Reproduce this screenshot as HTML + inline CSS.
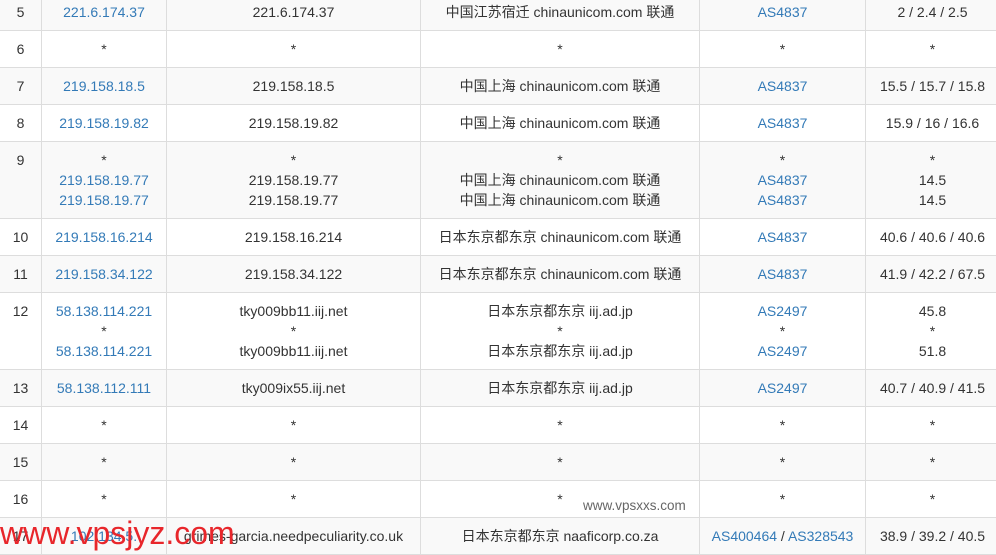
<!DOCTYPE html>
<html><head><meta charset="utf-8"><style>
body{margin:0;width:996px;height:551px;overflow:hidden;background:#fff;font-family:"Liberation Sans","Noto Sans CJK SC",sans-serif;font-size:14px;color:#333;position:relative}
table{position:absolute;top:-7px;left:-1px;border-collapse:collapse;table-layout:fixed;width:1000px}
td{border:1px solid #ddd;text-align:center;vertical-align:top;padding:8px 2px;line-height:20px;white-space:nowrap;overflow:hidden}
tr:nth-child(odd) td{background:#f9f9f9}
a{color:#337ab7;text-decoration:none}
.wm{position:absolute;left:0;top:515px;font-size:32px;color:#e8262b;font-family:"Liberation Sans",sans-serif}
.wm2{position:absolute;left:583px;top:498px;font-size:13.5px;color:#666}
</style></head><body>
<table>
<colgroup><col style="width:42px"><col style="width:125px"><col style="width:254px"><col style="width:279px"><col style="width:166px"><col style="width:134px"></colgroup>
<tr><td>5</td><td><a>221.6.174.37</a></td><td>221.6.174.37</td><td>中国江苏宿迁 chinaunicom.com 联通</td><td><a>AS4837</a></td><td>2 / 2.4 / 2.5</td></tr>
<tr><td>6</td><td>*</td><td>*</td><td>*</td><td>*</td><td>*</td></tr>
<tr><td>7</td><td><a>219.158.18.5</a></td><td>219.158.18.5</td><td>中国上海 chinaunicom.com 联通</td><td><a>AS4837</a></td><td>15.5 / 15.7 / 15.8</td></tr>
<tr><td>8</td><td><a>219.158.19.82</a></td><td>219.158.19.82</td><td>中国上海 chinaunicom.com 联通</td><td><a>AS4837</a></td><td>15.9 / 16 / 16.6</td></tr>
<tr><td>9</td><td>*<br><a>219.158.19.77</a><br><a>219.158.19.77</a></td><td>*<br>219.158.19.77<br>219.158.19.77</td><td>*<br>中国上海 chinaunicom.com 联通<br>中国上海 chinaunicom.com 联通</td><td>*<br><a>AS4837</a><br><a>AS4837</a></td><td>*<br>14.5<br>14.5</td></tr>
<tr><td>10</td><td><a>219.158.16.214</a></td><td>219.158.16.214</td><td>日本东京都东京 chinaunicom.com 联通</td><td><a>AS4837</a></td><td>40.6 / 40.6 / 40.6</td></tr>
<tr><td>11</td><td><a>219.158.34.122</a></td><td>219.158.34.122</td><td>日本东京都东京 chinaunicom.com 联通</td><td><a>AS4837</a></td><td>41.9 / 42.2 / 67.5</td></tr>
<tr><td>12</td><td><a>58.138.114.221</a><br>*<br><a>58.138.114.221</a></td><td>tky009bb11.iij.net<br>*<br>tky009bb11.iij.net</td><td>日本东京都东京 iij.ad.jp<br>*<br>日本东京都东京 iij.ad.jp</td><td><a>AS2497</a><br>*<br><a>AS2497</a></td><td>45.8<br>*<br>51.8</td></tr>
<tr><td>13</td><td><a>58.138.112.111</a></td><td>tky009ix55.iij.net</td><td>日本东京都东京 iij.ad.jp</td><td><a>AS2497</a></td><td>40.7 / 40.9 / 41.5</td></tr>
<tr><td>14</td><td>*</td><td>*</td><td>*</td><td>*</td><td>*</td></tr>
<tr><td>15</td><td>*</td><td>*</td><td>*</td><td>*</td><td>*</td></tr>
<tr><td>16</td><td>*</td><td>*</td><td>*</td><td>*</td><td>*</td></tr>
<tr><td>17</td><td><a>102.134.5.</a></td><td>grimes-garcia.needpeculiarity.co.uk</td><td>日本东京都东京 naaficorp.co.za</td><td><a>AS400464</a> / <a>AS328543</a></td><td>38.9 / 39.2 / 40.5</td></tr>
</table>
<div class="wm2">www.vpsxxs.com</div>
<div class="wm">www.vpsjyz.com</div>
</body></html>
